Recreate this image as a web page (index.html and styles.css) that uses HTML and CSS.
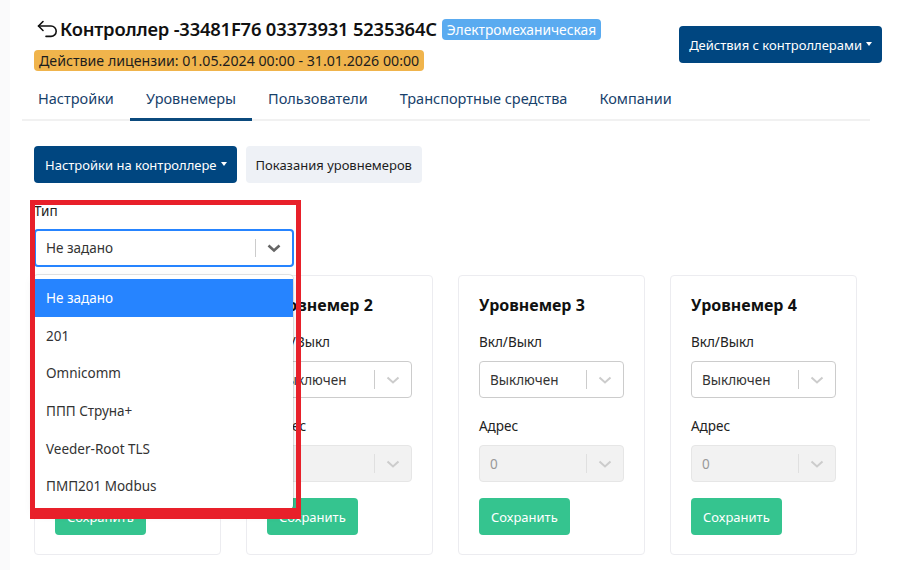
FILE: index.html
```html
<!DOCTYPE html>
<html lang="ru">
<head>
    <meta charset="UTF-8">
    <meta name="viewport" content="width=device-width, initial-scale=1.0">
    <title>Контроллер</title>
    <link rel="stylesheet" href="styles.css">
</head>
<body>

<div class="page">
    <div class="page-header">
        <div class="header-info">
            <div class="title-row">
                <svg class="back-icon" width="22" height="18" viewBox="0 0 22 18" fill="none" stroke="#111" stroke-width="1.6" stroke-linecap="round" stroke-linejoin="round">
                    <path d="M6 1.5 L1.5 6 L6 10.5"/>
                    <path d="M1.5 6 H14 A5.2 5.2 0 0 1 14 16.4 H9"/>
                </svg>
                <h1 class="title">Контроллер -33481F76 03373931 5235364C</h1>
                <span class="badge badge-type">Электромеханическая</span>
            </div>
            <span class="badge badge-license">Действие лицензии: 01.05.2024 00:00 - 31.01.2026 00:00</span>
        </div>
        <button class="btn btn-dark">Действия с контроллерами <span class="caret"></span></button>
    </div>

    <div class="content">
        <nav class="tabs">
            <a class="tab">Настройки</a>
            <a class="tab active">Уровнемеры</a>
            <a class="tab">Пользователи</a>
            <a class="tab">Транспортные средства</a>
            <a class="tab">Компании</a>
        </nav>

        <div class="toolbar">
            <button class="btn btn-dark">Настройки на контроллере <span class="caret"></span></button>
            <button class="btn btn-light">Показания уровнемеров</button>
        </div>

        <div class="type-field">
            <label class="field-label">Тип</label>
            <div class="select select-focused">
                <span class="select-value">Не задано</span>
                <span class="select-sep"></span>
                <span class="select-arrow">
                    <svg width="20" height="20" viewBox="0 0 20 20"><path d="M4.5 7.5 L10 12.5 L15.5 7.5" fill="none" stroke="currentColor" stroke-width="2.6"/></svg>
                </span>
            </div>

            <ul class="menu">
                <li class="menu-item selected">Не задано</li>
                <li class="menu-item">201</li>
                <li class="menu-item">Omnicomm</li>
                <li class="menu-item">ППП Струна+</li>
                <li class="menu-item">Veeder-Root TLS</li>
                <li class="menu-item">ПМП201 Modbus</li>
            </ul>
            <div class="highlight"></div>
        </div>

        <div class="cards">
            <div class="card">
                <h3 class="card-title">Уровнемер 1</h3>
                <label class="field-label">Вкл/Выкл</label>
                <div class="select">
                    <span class="select-value">Выключен</span>
                    <span class="select-sep"></span>
                    <span class="select-arrow"><svg width="20" height="20" viewBox="0 0 20 20"><path d="M4.5 7.5 L10 12.5 L15.5 7.5" fill="none" stroke="currentColor" stroke-width="2"/></svg></span>
                </div>
                <label class="field-label">Адрес</label>
                <div class="select select-disabled">
                    <span class="select-value">0</span>
                    <span class="select-sep"></span>
                    <span class="select-arrow"><svg width="20" height="20" viewBox="0 0 20 20"><path d="M4.5 7.5 L10 12.5 L15.5 7.5" fill="none" stroke="currentColor" stroke-width="2"/></svg></span>
                </div>
                <button class="btn btn-green">Сохранить</button>
            </div>
            <div class="card">
                <h3 class="card-title">Уровнемер 2</h3>
                <label class="field-label">Вкл/Выкл</label>
                <div class="select">
                    <span class="select-value">Выключен</span>
                    <span class="select-sep"></span>
                    <span class="select-arrow"><svg width="20" height="20" viewBox="0 0 20 20"><path d="M4.5 7.5 L10 12.5 L15.5 7.5" fill="none" stroke="currentColor" stroke-width="2"/></svg></span>
                </div>
                <label class="field-label">Адрес</label>
                <div class="select select-disabled">
                    <span class="select-value">0</span>
                    <span class="select-sep"></span>
                    <span class="select-arrow"><svg width="20" height="20" viewBox="0 0 20 20"><path d="M4.5 7.5 L10 12.5 L15.5 7.5" fill="none" stroke="currentColor" stroke-width="2"/></svg></span>
                </div>
                <button class="btn btn-green">Сохранить</button>
            </div>
            <div class="card">
                <h3 class="card-title">Уровнемер 3</h3>
                <label class="field-label">Вкл/Выкл</label>
                <div class="select">
                    <span class="select-value">Выключен</span>
                    <span class="select-sep"></span>
                    <span class="select-arrow"><svg width="20" height="20" viewBox="0 0 20 20"><path d="M4.5 7.5 L10 12.5 L15.5 7.5" fill="none" stroke="currentColor" stroke-width="2"/></svg></span>
                </div>
                <label class="field-label">Адрес</label>
                <div class="select select-disabled">
                    <span class="select-value">0</span>
                    <span class="select-sep"></span>
                    <span class="select-arrow"><svg width="20" height="20" viewBox="0 0 20 20"><path d="M4.5 7.5 L10 12.5 L15.5 7.5" fill="none" stroke="currentColor" stroke-width="2"/></svg></span>
                </div>
                <button class="btn btn-green">Сохранить</button>
            </div>
            <div class="card">
                <h3 class="card-title">Уровнемер 4</h3>
                <label class="field-label">Вкл/Выкл</label>
                <div class="select">
                    <span class="select-value">Выключен</span>
                    <span class="select-sep"></span>
                    <span class="select-arrow"><svg width="20" height="20" viewBox="0 0 20 20"><path d="M4.5 7.5 L10 12.5 L15.5 7.5" fill="none" stroke="currentColor" stroke-width="2"/></svg></span>
                </div>
                <label class="field-label">Адрес</label>
                <div class="select select-disabled">
                    <span class="select-value">0</span>
                    <span class="select-sep"></span>
                    <span class="select-arrow"><svg width="20" height="20" viewBox="0 0 20 20"><path d="M4.5 7.5 L10 12.5 L15.5 7.5" fill="none" stroke="currentColor" stroke-width="2"/></svg></span>
                </div>
                <button class="btn btn-green">Сохранить</button>
            </div>
        </div>
    </div>
</div>

</body>
</html>
```

FILE: styles.css
```css
body {
    margin: 0;
    font-family: "Noto Sans", "Open Sans", sans-serif;
    color: #222;
    background: #fff;
}

.page {
    border-left: 10px solid #fafafb;
    min-height: 570px;
    box-sizing: border-box;
}

/* header */
.page-header {
    display: flex;
    justify-content: space-between;
    align-items: flex-start;
    padding: 17px 25px 0 24px;
}

.header-info {
    display: flex;
    flex-direction: column;
    align-items: flex-start;
    gap: 9px;
}

.title-row {
    display: flex;
    align-items: center;
    padding-left: 3px;
}

.back-icon {
    margin-right: 1px;
}

.title {
    margin: 0;
    font-size: 18.4px;
    font-weight: 600;
    color: #111;
    line-height: 24px;
    letter-spacing: -0.2px;
}

.badge {
    display: inline-block;
    border-radius: 4px;
    font-size: 14px;
    line-height: 21px;
    padding: 0 5px;
}

.badge-type {
    background: #5aabf0;
    color: #fff;
    margin-left: 5px;
    font-size: 13.8px;
}

.badge-license {
    background: #f0b44c;
    color: #1d1d1d;
    font-size: 14.2px;
}

/* buttons */
.btn {
    font-family: inherit;
    font-size: 13px;
    border: none;
    border-radius: 4px;
    height: 37px;
    padding: 0 11px;
    cursor: pointer;
    display: inline-flex;
    align-items: center;
}

.btn-dark {
    background: #004680;
    color: #fff;
}

.toolbar .btn-dark {
    padding: 0 10px 0 11px;
}

.header-info + .btn-dark {
    margin-top: 9px;
    padding: 0 10px;
}

.btn-light {
    background: #eef1f6;
    color: #1d1d1d;
    padding: 0 10px;
}

.btn-green {
    background: #35c48f;
    color: #fff;
    height: 37px;
    padding: 0 12px;
}

.caret {
    display: inline-block;
    margin-left: 4px;
    border-top: 4px solid #fff;
    border-left: 3.5px solid transparent;
    border-right: 3.5px solid transparent;
    margin-top: -2px;
}

/* tabs */
.content {
    margin-left: 12px;
    width: 848px;
}

.tabs {
    display: flex;
    margin-top: 8px;
    border-bottom: 2px solid #f1f1f1;
}

.tab {
    padding: 8px 16px 9px;
    font-size: 14.5px;
    color: #17416b;
    line-height: 22px;
    border-bottom: 3px solid transparent;
    margin-bottom: -2px;
}

.tab.active {
    border-bottom-color: #0b4a7d;
}

.toolbar {
    display: flex;
    gap: 9px;
    padding: 25px 0 0 12px;
}

/* type select */
.type-field {
    position: relative;
    width: 260px;
    margin: 18px 0 8px 12px;
}

.field-label {
    display: block;
    font-size: 13.5px;
    line-height: 20px;
    color: #222;
    margin-bottom: 8px;
}

.select {
    display: flex;
    align-items: center;
    height: 37px;
    border: 1px solid #ccc;
    border-radius: 4px;
    box-sizing: border-box;
    background: #fff;
}

.select-value {
    flex: 1;
    padding-left: 10px;
    font-size: 13.5px;
    color: #333;
}

.select-sep {
    width: 1px;
    align-self: stretch;
    margin: 8px 0;
    background: #ccc;
}

.select-arrow {
    width: 36px;
    display: flex;
    justify-content: center;
    color: #ccc;
}

.select-focused {
    height: 38px;
    border: 2px solid #2684ff;
}

.select-focused .select-arrow {
    color: #666;
}

.select-disabled {
    background: #f2f2f2;
    border-color: #e6e6e6;
}

.select-disabled .select-value {
    color: #999;
}

.select-disabled .select-sep {
    background: #e0e0e0;
}

.menu {
    position: absolute;
    top: 74px;
    left: 0;
    width: 259px;
    margin: 0;
    padding: 4px 0;
    list-style: none;
    background: #fff;
    border-radius: 4px;
    box-shadow: 0 0 0 1px rgba(0, 0, 0, 0.1), 0 4px 11px rgba(0, 0, 0, 0.1);
    z-index: 2;
}

.menu-item {
    height: 37.7px;
    line-height: 39px;
    padding: 0 12px;
    font-size: 13.5px;
    color: #333;
}

.menu-item.selected {
    background: #2684ff;
    color: #fff;
}

.highlight {
    position: absolute;
    top: -1px;
    left: -4px;
    width: 271px;
    height: 319px;
    border: 5px solid #e8202a;
    border-bottom-width: 11px;
    box-sizing: border-box;
    z-index: 3;
}

/* cards */
.cards {
    display: flex;
    gap: 25px;
    padding-left: 12px;
}

.card {
    width: 187px;
    height: 280px;
    box-sizing: border-box;
    border: 1px solid #ececf0;
    border-radius: 4px;
    padding: 18px 20px;
}

.card-title {
    margin: 0 0 16px;
    font-size: 16px;
    font-weight: 700;
    color: #111;
    line-height: 22px;
}

.card .select {
    width: 145px;
    margin-bottom: 18px;
}

.card .field-label {
    margin-bottom: 9px;
}

.card .select-disabled {
    margin-bottom: 16px;
}
```
